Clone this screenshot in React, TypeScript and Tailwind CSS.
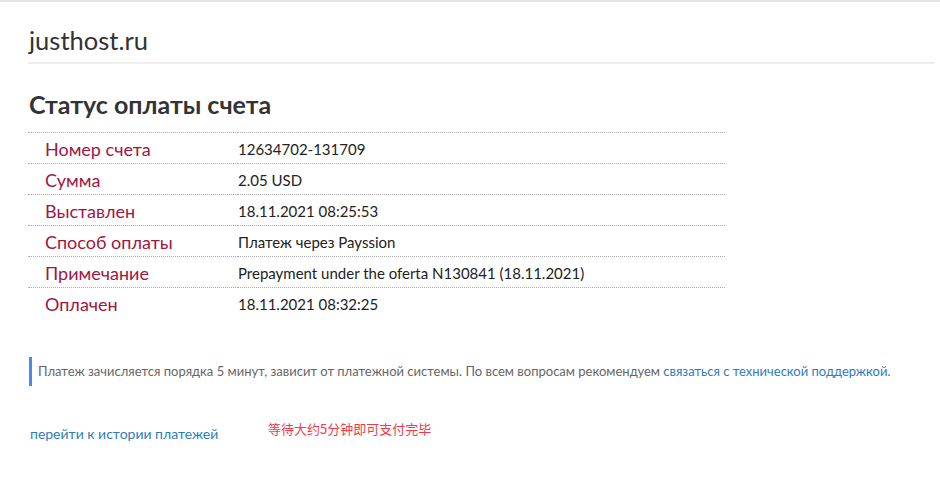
import React from "react";

const rows: [string, string][] = [
  ["Номер счета", "12634702-131709"],
  ["Сумма", "2.05 USD"],
  ["Выставлен", "18.11.2021 08:25:53"],
  ["Способ оплаты", "Платеж через Payssion"],
  ["Примечание", "Prepayment under the oferta N130841 (18.11.2021)"],
  ["Оплачен", "18.11.2021 08:32:25"],
];

export default function App() {
  return (
    <div className="min-h-screen bg-white border-t-2 border-[#e6e6e6] font-['Lato','Open_Sans',sans-serif] text-[#333]">
      <div className="pl-[28px] pr-[5px]">
        <header className="border-b-2 border-[#eeeeee] pt-[24px] pb-[8px] pl-[1px]">
          <div className="text-[25.5px] leading-[28px] text-[#333]">justhost.ru</div>
        </header>

        <h1 className="mt-[25px] pl-[1px] text-[25px] leading-[30px] font-bold text-[#333]">
          Статус оплаты счета
        </h1>

        <table className="mt-[13px] w-[697px] border-collapse">
          <tbody>
            {rows.map(([label, value]) => (
              <tr key={label} className="border-t border-dotted border-[#aaaaaa]">
                <td className="w-[210px] h-[31px] pl-[17px] pt-[2px] text-[18px] text-[#a3153f]">{label}</td>
                <td className="h-[31px] pt-[2px] text-[15px] text-[#222]">{value}</td>
              </tr>
            ))}
          </tbody>
        </table>

        <div className="mt-[38px] ml-[1px] border-l-[3px] border-[#4a8af4] pl-[6px] py-[6px] text-[13px] leading-[17px] text-[#666]">
          Платеж зачисляется порядка 5 минут, зависит от платежной системы. По всем вопросам рекомендуем{" "}
          <a href="#" className="text-[#2d7cc1]">связаться с технической поддержкой</a>.
        </div>

        <div className="mt-[33px] pl-[2px] flex items-start">
          <a href="#" className="mt-[4px] w-[238px] text-[14px] text-[#2d7cc1]">перейти к истории платежей</a>
          <span className="text-[13px] text-[#f0394b] font-['Noto_Sans_CJK_SC',sans-serif]">等待大约5分钟即可支付完毕</span>
        </div>
      </div>
    </div>
  );
}
